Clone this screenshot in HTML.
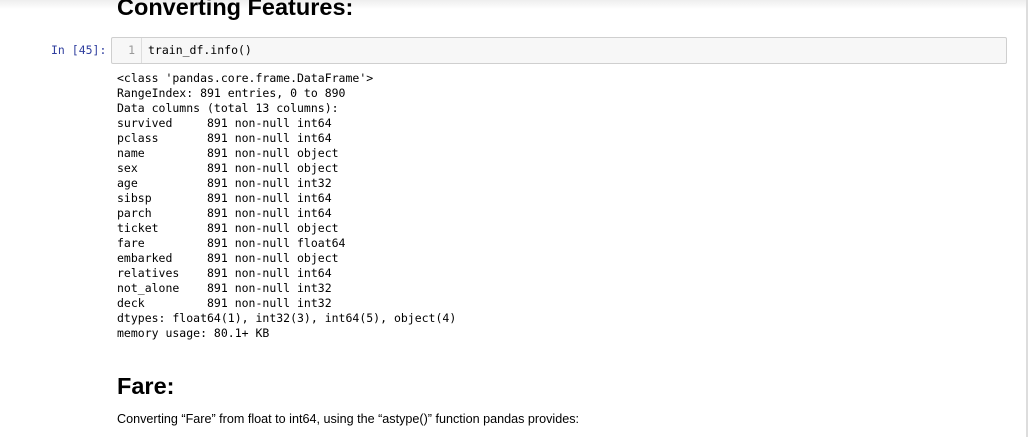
<html><head><style>
body{margin:0;width:1028px;height:437px;overflow:hidden;background:#fff;position:relative;font-family:"Liberation Sans",Arial,sans-serif}
.sh{position:absolute;left:0;top:0;width:1026px;height:9px;background:linear-gradient(#eee,#fff)}
.rb{position:absolute;right:0;top:0;width:2px;height:437px;background:#ddd}
h1{position:absolute;left:117px;top:-6px;margin:0;font-size:23.5px;font-weight:bold;color:#000}
.pr{position:absolute;left:51px;top:43px;font:11.5px "DejaVu Sans Mono",monospace;color:#303f9f}
.cell{position:absolute;left:111px;top:37px;width:894px;height:25px;background:#f7f7f7;border:1px solid #cfcfcf;border-radius:2px}
.ln{position:absolute;left:0;top:0;width:30px;height:25px;border-right:1px solid #ddd;font:11.5px "DejaVu Sans Mono",monospace;color:#999;text-align:right;line-height:25px;box-sizing:border-box;padding-right:6px}
.code{position:absolute;left:36px;top:0;font:11.5px "DejaVu Sans Mono",monospace;color:#000}
pre{position:absolute;left:117px;top:71px;margin:0;font:11.5px/15px "DejaVu Sans Mono",monospace;color:#000}
h2{position:absolute;left:117px;top:373px;margin:0;font-size:23.5px;font-weight:bold}
p{position:absolute;left:117px;top:412px;margin:0;font-size:12.6px;color:#000}
</style></head><body>
<div class="sh"></div><div class="rb"></div>
<h1>Converting Features:</h1>
<div class="pr">In [45]:</div>
<div class="cell"><div class="ln">1</div><div class="code" style="line-height:25px">train_df.info()</div></div>
<pre>&lt;class 'pandas.core.frame.DataFrame'&gt;
RangeIndex: 891 entries, 0 to 890
Data columns (total 13 columns):
survived     891 non-null int64
pclass       891 non-null int64
name         891 non-null object
sex          891 non-null object
age          891 non-null int32
sibsp        891 non-null int64
parch        891 non-null int64
ticket       891 non-null object
fare         891 non-null float64
embarked     891 non-null object
relatives    891 non-null int64
not_alone    891 non-null int32
deck         891 non-null int32
dtypes: float64(1), int32(3), int64(5), object(4)
memory usage: 80.1+ KB</pre>
<h2>Fare:</h2>
<p>Converting “Fare” from float to int64, using the “astype()” function pandas provides:</p>
</body></html>
